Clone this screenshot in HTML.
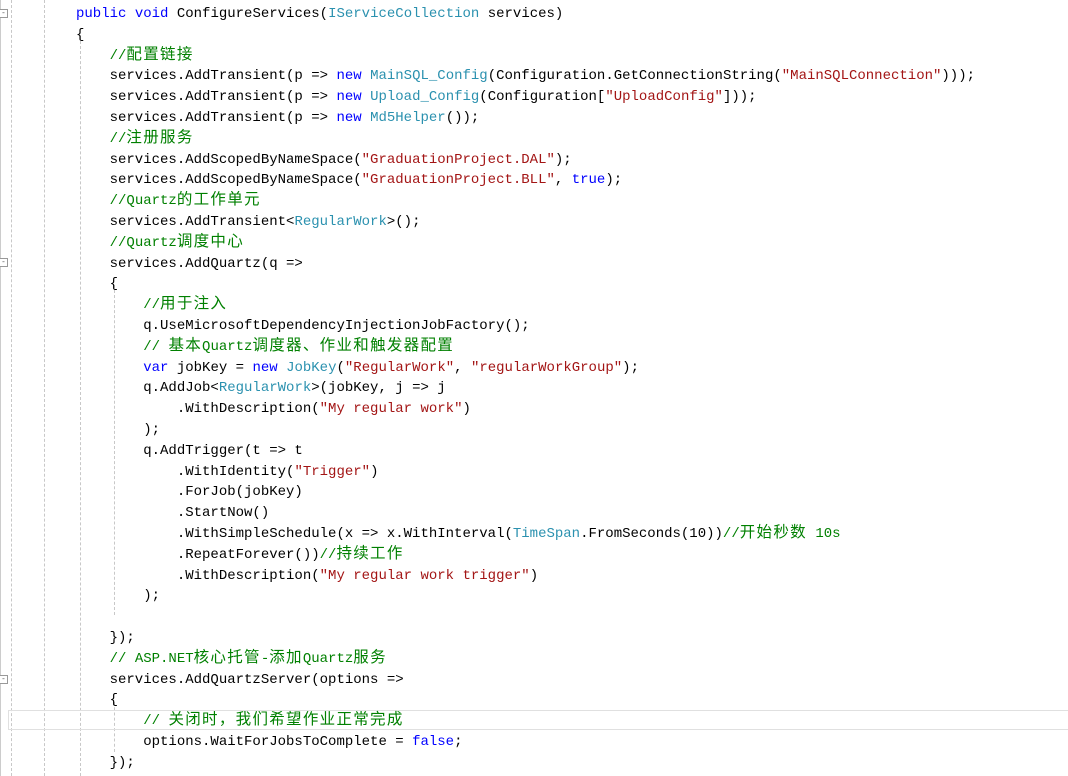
<!DOCTYPE html>
<html><head><meta charset="utf-8"><style>
html,body{margin:0;padding:0;background:#fff;width:1068px;height:776px;overflow:hidden;position:relative}
.code{position:absolute;left:76px;top:4px;font-family:"Liberation Mono","Noto Sans CJK SC",monospace;font-size:14px;line-height:20.8px;color:#000;white-space:pre}
.k{color:#0000ff}.t{color:#2b91af}.s{color:#a31515}.c{color:#008000}
.z{font-size:15.5px;letter-spacing:1.3px;line-height:10px}
.v{position:absolute;top:0;height:776px;border-left:1px dashed #c8c8c8}
.box{position:absolute;left:-1px;width:7px;height:7px;border:1px solid #999;background:#fff;font-size:8px;line-height:6px;text-align:center;color:#555}
.cur{position:absolute;left:8px;top:710px;width:1070px;height:20px;border:1px solid #e0e0e0;box-sizing:border-box}
</style></head><body>
<div style="position:absolute;left:0;top:0;height:776px;border-left:1px solid #ccc"></div>
<div class="v" style="left:11px"></div>
<div class="v" style="left:44px"></div>
<div class="v" style="left:80px;top:36px;height:740px"></div>
<div class="v" style="left:114px;top:285px;height:330px"></div>
<div class="v" style="left:114px;top:702px;height:50px"></div>
<div class="box" style="top:9px">-</div>
<div class="box" style="top:258px">-</div>
<div class="box" style="top:675px">-</div>
<div class="cur"></div>
<div class="code"><span class="k">public</span> <span class="k">void</span> ConfigureServices(<span class="t">IServiceCollection</span> services)
{
    <span class="c">//<span class="z">配置链接</span></span>
    services.AddTransient(p =&gt; <span class="k">new</span> <span class="t">MainSQL_Config</span>(Configuration.GetConnectionString(<span class="s">"MainSQLConnection"</span>)));
    services.AddTransient(p =&gt; <span class="k">new</span> <span class="t">Upload_Config</span>(Configuration[<span class="s">"UploadConfig"</span>]));
    services.AddTransient(p =&gt; <span class="k">new</span> <span class="t">Md5Helper</span>());
    <span class="c">//<span class="z">注册服务</span></span>
    services.AddScopedByNameSpace(<span class="s">"GraduationProject.DAL"</span>);
    services.AddScopedByNameSpace(<span class="s">"GraduationProject.BLL"</span>, <span class="k">true</span>);
    <span class="c">//Quartz<span class="z">的工作单元</span></span>
    services.AddTransient&lt;<span class="t">RegularWork</span>&gt;();
    <span class="c">//Quartz<span class="z">调度中心</span></span>
    services.AddQuartz(q =&gt;
    {
        <span class="c">//<span class="z">用于注入</span></span>
        q.UseMicrosoftDependencyInjectionJobFactory();
        <span class="c">// <span class="z">基本</span>Quartz<span class="z">调度器、作业和触发器配置</span></span>
        <span class="k">var</span> jobKey = <span class="k">new</span> <span class="t">JobKey</span>(<span class="s">"RegularWork"</span>, <span class="s">"regularWorkGroup"</span>);
        q.AddJob&lt;<span class="t">RegularWork</span>&gt;(jobKey, j =&gt; j
            .WithDescription(<span class="s">"My regular work"</span>)
        );
        q.AddTrigger(t =&gt; t
            .WithIdentity(<span class="s">"Trigger"</span>)
            .ForJob(jobKey)
            .StartNow()
            .WithSimpleSchedule(x =&gt; x.WithInterval(<span class="t">TimeSpan</span>.FromSeconds(10))<span class="c">//<span class="z">开始秒数</span> 10s</span>
            .RepeatForever())<span class="c">//<span class="z">持续工作</span></span>
            .WithDescription(<span class="s">"My regular work trigger"</span>)
        );

    });
    <span class="c">// ASP.NET<span class="z">核心托管</span>-<span class="z">添加</span>Quartz<span class="z">服务</span></span>
    services.AddQuartzServer(options =&gt;
    {
        <span class="c">// <span class="z">关闭时，我们希望作业正常完成</span></span>
        options.WaitForJobsToComplete = <span class="k">false</span>;
    });</div>
</body></html>
